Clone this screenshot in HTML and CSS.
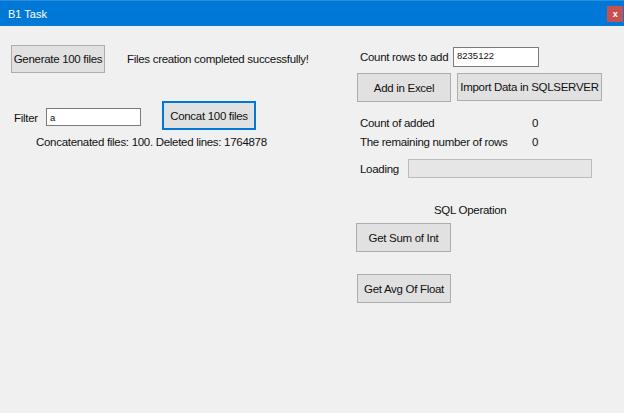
FILE: index.html
```html
<!DOCTYPE html>
<html>
<head>
<meta charset="utf-8">
<link rel="stylesheet" href="styles.css">
</head>
<body>
<div class="window">
  <div class="titlebar">
    <span class="title">B1 Task</span>
    <span class="close">x</span>
  </div>
  <div class="content">
    <div class="left">
      <div class="row1">
        <button class="btn gen">Generate 100 files</button>
        <span class="status">Files creation completed successfully!</span>
      </div>
      <div class="filter-row">
        <span class="filter-label">Filter</span>
        <div class="input filter-input">a</div>
        <button class="btn concat">Concat 100 files</button>
      </div>
      <div class="concat-info">Concatenated files: 100. Deleted lines: 1764878</div>
    </div>
    <div class="right">
      <div class="count-row">
        <span class="count-label">Count rows to add</span>
        <div class="input count-input">8235122</div>
      </div>
      <div class="btn-row">
        <button class="btn add">Add in Excel</button>
        <button class="btn import">Import Data in SQLSERVER</button>
      </div>
      <div class="stats">
        <span>Count of added</span><span>0</span>
        <span>The remaining number of rows</span><span>0</span>
      </div>
      <div class="loading-row">
        <span class="loading-label">Loading</span>
        <div class="progress"></div>
      </div>
      <div class="sql-title">SQL Operation</div>
      <button class="btn sum">Get Sum of Int</button>
      <button class="btn avg">Get Avg Of Float</button>
    </div>
  </div>
</div>
</body>
</html>
```

FILE: styles.css
```css
html, body {
  margin: 0;
  padding: 0;
}
body {
  width: 624px;
  height: 413px;
  background: #f0f0f0;
  font-family: "Liberation Sans", Arial, sans-serif;
  font-size: 11.5px;
  letter-spacing: -0.3px;
  color: #111;
  overflow: hidden;
  white-space: nowrap;
}
.window {
  height: 413px;
}
.titlebar {
  height: 26px;
  box-sizing: border-box;
  background: #0078d7;
  border-top: 1px solid #2a8ee0;
  display: flex;
  align-items: center;
  justify-content: space-between;
  padding-left: 8px;
}
.title {
  color: #fff;
  font-size: 11px;
  letter-spacing: 0;
}
.close {
  width: 16px;
  height: 16px;
  margin-right: 1px;
  background: #c75050;
  color: #fff;
  font-size: 9px;
  font-weight: bold;
  display: flex;
  align-items: center;
  justify-content: center;
}
.content {
  display: flex;
}
.left {
  width: 345px;
  padding-left: 11px;
}
.btn {
  font-family: inherit;
  font-size: 11.5px;
  letter-spacing: -0.3px;
  color: #111;
  background: #e1e1e1;
  border: 1px solid #adadad;
  box-sizing: border-box;
  padding: 0;
  margin: 0;
  display: block;
  white-space: nowrap;
}
.row1 {
  margin-top: 19px;
  display: flex;
  align-items: center;
}
.gen {
  width: 94px;
  height: 28px;
}
.status {
  margin-left: 22px;
}
.filter-row {
  margin-top: 28px;
  display: flex;
  align-items: center;
  height: 29px;
}
.filter-label {
  margin-left: 3px;
  width: 32px;
  margin-top: 5px;
}
.input {
  background: #fff;
  border: 1px solid #7a7a7a;
  box-sizing: border-box;
  font-size: 9.5px;
  letter-spacing: 0;
  padding-left: 3px;
  display: flex;
  align-items: center;
}
.filter-input {
  width: 95px;
  height: 18px;
  margin-top: 3px;
}
.concat {
  margin-left: 21px;
  width: 94px;
  height: 29px;
  border: 1px solid #0078d7;
  box-shadow: inset 0 0 0 1px #0078d7;
}
.concat-info {
  margin-left: 25px;
  margin-top: 5px;
  line-height: 15px;
}
.right {
  display: flex;
  flex-direction: column;
  align-items: flex-start;
}
.count-row {
  margin-top: 21px;
  display: flex;
  align-items: center;
}
.count-label {
  margin-left: 4px;
  width: 93px;
}
.count-input {
  width: 86px;
  height: 20px;
  align-items: flex-start;
  padding-top: 2px;
}
.btn-row {
  margin-top: 6px;
  display: flex;
}
.add {
  margin-left: 1px;
  width: 94px;
  height: 29px;
}
.import {
  margin-left: 6px;
  width: 145px;
  height: 28px;
}
.stats {
  margin-top: 11px;
  margin-left: 4px;
  display: grid;
  grid-template-columns: 172px auto;
  grid-auto-rows: 19px;
  align-items: center;
}
.loading-row {
  margin-top: 8px;
  display: flex;
  align-items: center;
}
.loading-label {
  margin-left: 4px;
  width: 48px;
}
.progress {
  width: 184px;
  height: 19px;
  box-sizing: border-box;
  background: #e6e6e6;
  border: 1px solid #bcbcbc;
}
.sql-title {
  margin-top: 25px;
  margin-left: 78px;
  line-height: 15px;
}
.sum {
  margin-top: 5px;
  width: 95px;
  height: 29px;
}
.avg {
  margin-top: 22px;
  margin-left: 1px;
  width: 94px;
  height: 29px;
}
```
